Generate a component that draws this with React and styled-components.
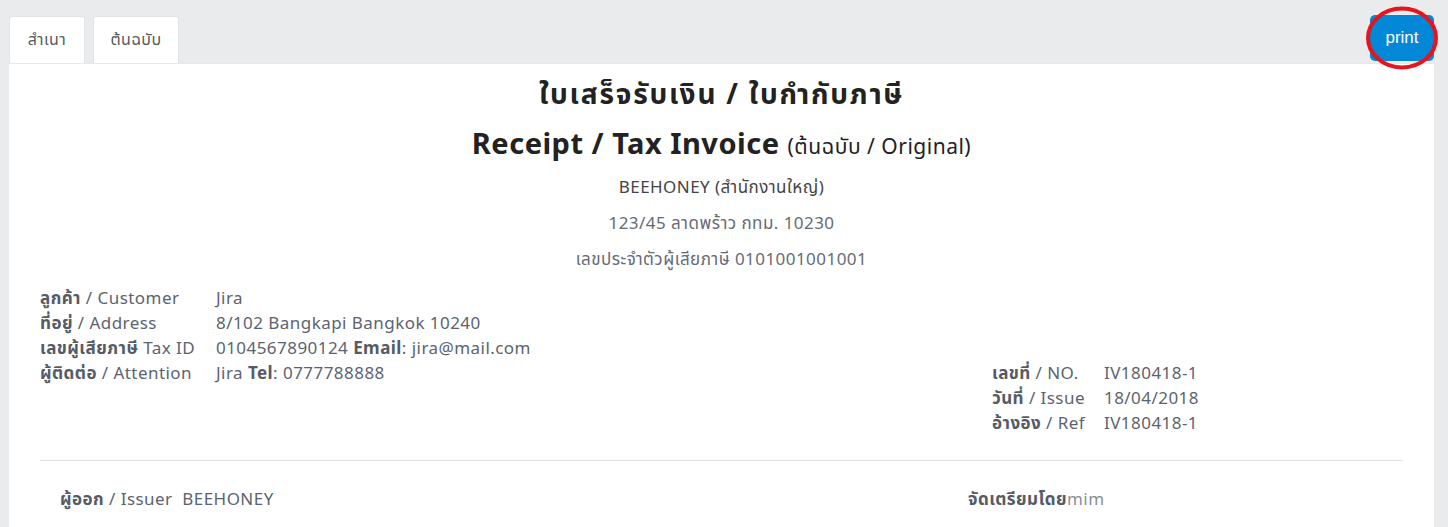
import React from "react";
import styled, { createGlobalStyle } from "styled-components";

const Global = createGlobalStyle`
    html, body {
        margin: 0;
        background: #eaebed;
        font-family: "Noto Sans", "Noto Sans Thai", sans-serif;
        letter-spacing: 0.45px;
    }
`;

const Page = styled.div`
    padding: 16px 14px 0 9px;
`;

const TopBar = styled.div`
    display: flex;
    align-items: flex-start;
    justify-content: space-between;
    height: 47px;
`;

const Tabs = styled.div`
    display: flex;
    gap: 8px;
`;

const Tab = styled.div`
    width: ${props => props.w}px;
    height: 47px;
    box-sizing: border-box;
    display: flex;
    align-items: center;
    justify-content: center;
    background: #fff;
    border: 1px solid #e2e4e7;
    border-bottom: none;
    border-radius: 3px 3px 0 0;
    font-size: 16px;
    color: #555a60;
`;

const PrintWrap = styled.div`
    position: relative;
    margin-top: -1px;
`;

const PrintButton = styled.button`
    width: 64px;
    height: 46px;
    border: none;
    border-radius: 5px;
    background: #0288d6;
    color: #fff;
    font-family: "Liberation Sans", Arial, sans-serif;
    font-size: 17px;
    letter-spacing: 0;
    padding: 0 0 1px;
`;

const Circle = styled.svg`
    position: absolute;
    left: -5px;
    top: -9px;
    pointer-events: none;
`;

const Paper = styled.div`
    background: #fff;
    border-top: 1px solid #e6e8eb;
    padding: 6px 31px 0 31px;
    height: 470px;
    box-sizing: border-box;
    color: #5c6370;
`;

const Header = styled.div`
    display: flex;
    flex-direction: column;
    align-items: center;
`;

const Title = styled.div`
    font-size: 28px;
    font-weight: 700;
    color: #222;
    line-height: 46px;
    letter-spacing: 1.8px;
`;

const SubTitle = styled.div`
    font-size: 29px;
    font-weight: 700;
    color: #222;
    line-height: 46px;
    margin-top: 4px;
    letter-spacing: 0.5px;

    small {
        font-size: 21px;
        font-weight: 400;
    }
`;

const HeadLine = styled.div`
    font-size: 17px;
    line-height: 36px;
    color: ${props => props.dark ? "#444" : "#666b73"};
`;

const InfoRow = styled.div`
    display: flex;
    justify-content: space-between;
    align-items: flex-start;
    margin-top: 8px;
    padding-bottom: 25px;
    border-bottom: 1px solid #dedfe1;
`;

const InfoGrid = styled.div`
    display: grid;
    grid-template-columns: ${props => props.col}px auto;
    width: ${props => props.w ? props.w + "px" : "auto"};
    font-size: 17px;
    line-height: 25px;
    margin-top: ${props => props.mt || 0}px;
`;

const Label = styled.div`
    white-space: nowrap;
    b {
        font-weight: 700;
        color: #555b66;
    }
`;

const Value = styled.div`
    white-space: nowrap;
    b {
        font-weight: 700;
        color: #555b66;
    }
`;

const Footer = styled.div`
    display: flex;
    font-size: 17px;
    line-height: 25px;
    padding: 25px 0 0 20px;
    b {
        font-weight: 700;
        color: #555b66;
    }
`;

const FootLeft = styled.div`
    width: 908px;
`;

const Light = styled.span`
    color: #8a8f96;
`;

const customer = [
    ["ลูกค้า", " / Customer", "Jira"],
    ["ที่อยู่", " / Address", "8/102 Bangkapi Bangkok 10240"],
];

export default function App() {
    return (
        <>
            <Global />
            <Page>
                <TopBar>
                    <Tabs>
                        <Tab w={76}>สำเนา</Tab>
                        <Tab w={86}>ต้นฉบับ</Tab>
                    </Tabs>
                    <PrintWrap>
                        <PrintButton>print</PrintButton>
                        <Circle width="74" height="64" viewBox="0 0 74 64">
                            <ellipse cx="37" cy="32" rx="34" ry="29.5" fill="none" stroke="#e8131b" strokeWidth="4" />
                        </Circle>
                    </PrintWrap>
                </TopBar>
                <Paper>
                    <Header>
                        <Title>ใบเสร็จรับเงิน / ใบกำกับภาษี</Title>
                        <SubTitle>Receipt / Tax Invoice <small>(ต้นฉบับ / Original)</small></SubTitle>
                        <HeadLine dark>BEEHONEY (สำนักงานใหญ่)</HeadLine>
                        <HeadLine>123/45 ลาดพร้าว กทม. 10230</HeadLine>
                        <HeadLine>เลขประจำตัวผู้เสียภาษี 0101001001001</HeadLine>
                    </Header>
                    <InfoRow>
                        <InfoGrid col={176}>
                            {customer.map(([th, en, v]) => (
                                <React.Fragment key={th}>
                                    <Label><b>{th}</b>{en}</Label>
                                    <Value>{v}</Value>
                                </React.Fragment>
                            ))}
                            <Label><b>เลขผู้เสียภาษี</b> Tax ID</Label>
                            <Value>0104567890124 <b>Email</b>: jira@mail.com</Value>
                            <Label><b>ผู้ติดต่อ</b> / Attention</Label>
                            <Value>Jira <b>Tel</b>: 0777788888</Value>
                        </InfoGrid>
                        <InfoGrid col={112} w={411} mt={75}>
                            <Label><b>เลขที่</b> / NO.</Label>
                            <Value>IV180418-1</Value>
                            <Label><b>วันที่</b> / Issue</Label>
                            <Value>18/04/2018</Value>
                            <Label><b>อ้างอิง</b> / Ref</Label>
                            <Value>IV180418-1</Value>
                        </InfoGrid>
                    </InfoRow>
                    <Footer>
                        <FootLeft><b>ผู้ออก</b> / Issuer&nbsp; BEEHONEY</FootLeft>
                        <div><b>จัดเตรียมโดย</b><Light>mim</Light></div>
                    </Footer>
                </Paper>
            </Page>
        </>
    );
}
